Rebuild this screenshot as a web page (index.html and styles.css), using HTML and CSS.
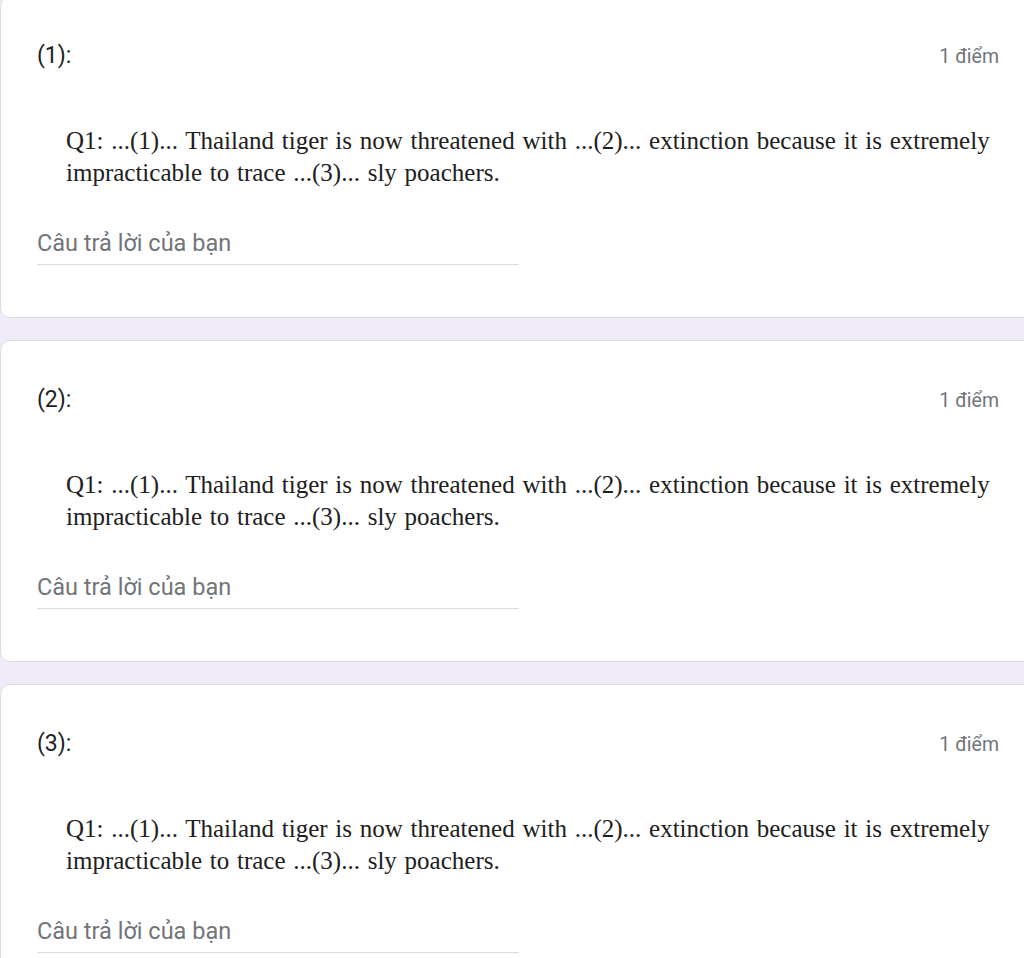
FILE: index.html
```html
<!DOCTYPE html>
<html lang="vi">
<head>
<meta charset="utf-8">
<title>Form</title>
<link rel="stylesheet" href="styles.css">
</head>
<body>
<div class="list">
  <div class="card">
    <div class="head"><span class="title">(1):</span><span class="points">1 điểm</span></div>
    <p class="question">Q1: ...(1)... Thailand tiger is now threatened with ...(2)... extinction because it is extremely impracticable to trace ...(3)... sly poachers.</p>
    <div class="answer">Câu trả lời của bạn</div>
  </div>
  <div class="card">
    <div class="head"><span class="title">(2):</span><span class="points">1 điểm</span></div>
    <p class="question">Q1: ...(1)... Thailand tiger is now threatened with ...(2)... extinction because it is extremely impracticable to trace ...(3)... sly poachers.</p>
    <div class="answer">Câu trả lời của bạn</div>
  </div>
  <div class="card">
    <div class="head"><span class="title">(3):</span><span class="points">1 điểm</span></div>
    <p class="question">Q1: ...(1)... Thailand tiger is now threatened with ...(2)... extinction because it is extremely impracticable to trace ...(3)... sly poachers.</p>
    <div class="answer">Câu trả lời của bạn</div>
  </div>
</div>
</body>
</html>
```
FILE: styles.css
```css
html, body {
  margin: 0;
  padding: 0;
  background: #f0ebf8;
  overflow: hidden;
}
.list {
  display: flex;
  flex-direction: column;
  gap: 22px;
  margin-top: -4px;
}
.card {
  width: 1040px;
  box-sizing: border-box;
  height: 322px;
  background: #fff;
  border: 1px solid #dadce0;
  border-radius: 10px;
  padding: 47px 40px 0 36px;
}
.head {
  display: flex;
  justify-content: space-between;
  align-items: baseline;
  height: 24px;
}
.title {
  font-family: Roboto, "Noto Sans", sans-serif;
  font-size: 23px;
  line-height: 24px;
  color: #202124;
}
.points {
  font-family: Roboto, "Noto Sans", sans-serif;
  font-size: 19.5px;
  line-height: 24px;
  color: #70757a;
}
.question {
  margin: 57px 0 0 29px;
  font-family: "Liberation Serif", "Times New Roman", serif;
  font-size: 25px;
  line-height: 32px;
  word-spacing: 1.5px;
  color: #202020;
}
.answer {
  margin-top: 42px;
  width: 482px;
  font-family: Roboto, "Noto Sans", sans-serif;
  font-size: 23.5px;
  line-height: 24px;
  color: #70757a;
  padding-bottom: 9px;
  border-bottom: 1px solid #dadce0;
}
```
